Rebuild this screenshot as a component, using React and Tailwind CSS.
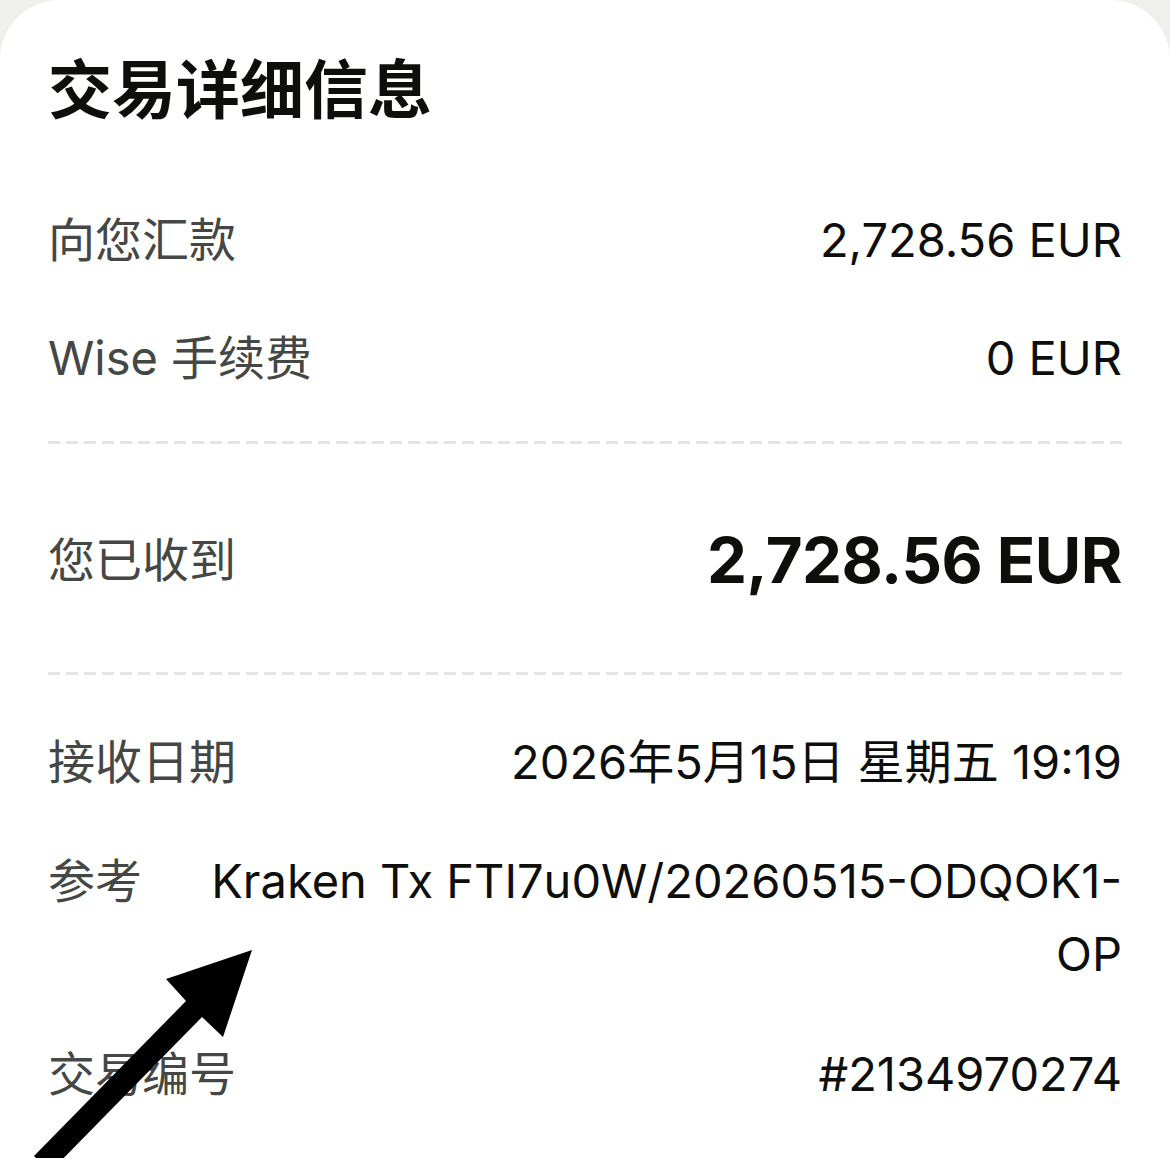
const FONT = "font-['Inter','Noto_Sans_CJK_SC',sans-serif]"

function Row({ label, children, className = '' }) {
  return (
    <div className={`flex justify-between items-start gap-[24px] ${className}`}>
      <div className="text-[#454745] shrink-0">{label}</div>
      <div className="text-[#0e0f0c] text-right whitespace-nowrap">{children}</div>
    </div>
  )
}

function Divider({ className = '' }) {
  return (
    <div
      className={`h-[3px] bg-[repeating-linear-gradient(to_right,#e4e4e2_0_12px,transparent_12px_18px)] ${className}`}
    />
  )
}

export default function App() {
  return (
    <div className={`relative w-[1170px] h-[1158px] overflow-hidden bg-[#efefec] ${FONT}`}>
      <div className="h-full bg-white rounded-t-[60px] px-[48px] pt-[50px] text-[47px] leading-[72px]">
        <h1 className="text-[64px] leading-[80px] font-bold text-[#0e0f0c]">交易详细信息</h1>

        <Row label="向您汇款" className="mt-[74px]">2,728.56 EUR</Row>
        <Row label="Wise 手续费" className="mt-[46px]">0 EUR</Row>

        <Divider className="mt-[47px]" />

        <div className="flex justify-between items-center mt-[76px] h-[80px]">
          <div className="text-[#454745]">您已收到</div>
          <div className="text-[#0e0f0c] text-[63.5px] font-bold tracking-[-0.5px]">2,728.56 EUR</div>
        </div>

        <Divider className="mt-[72px]" />

        <Row label="接收日期" className="mt-[51px]">2026年5月15日 星期五 19:19</Row>
        <Row label="参考" className="mt-[46px] leading-[73px]">
          Kraken Tx FTI7u0W/20260515-ODQOK1-
          <br />
          OP
        </Row>
        <Row label="交易编号" className="mt-[48px]">#2134970274</Row>
      </div>

      <svg className="absolute inset-0 pointer-events-none" width="1170" height="1158" viewBox="0 0 1170 1158">
        <polygon
          fill="#000"
          points="252,950 223,1037 202,1017 50,1172 34,1156 186,1001 166,979"
        />
      </svg>
    </div>
  )
}
